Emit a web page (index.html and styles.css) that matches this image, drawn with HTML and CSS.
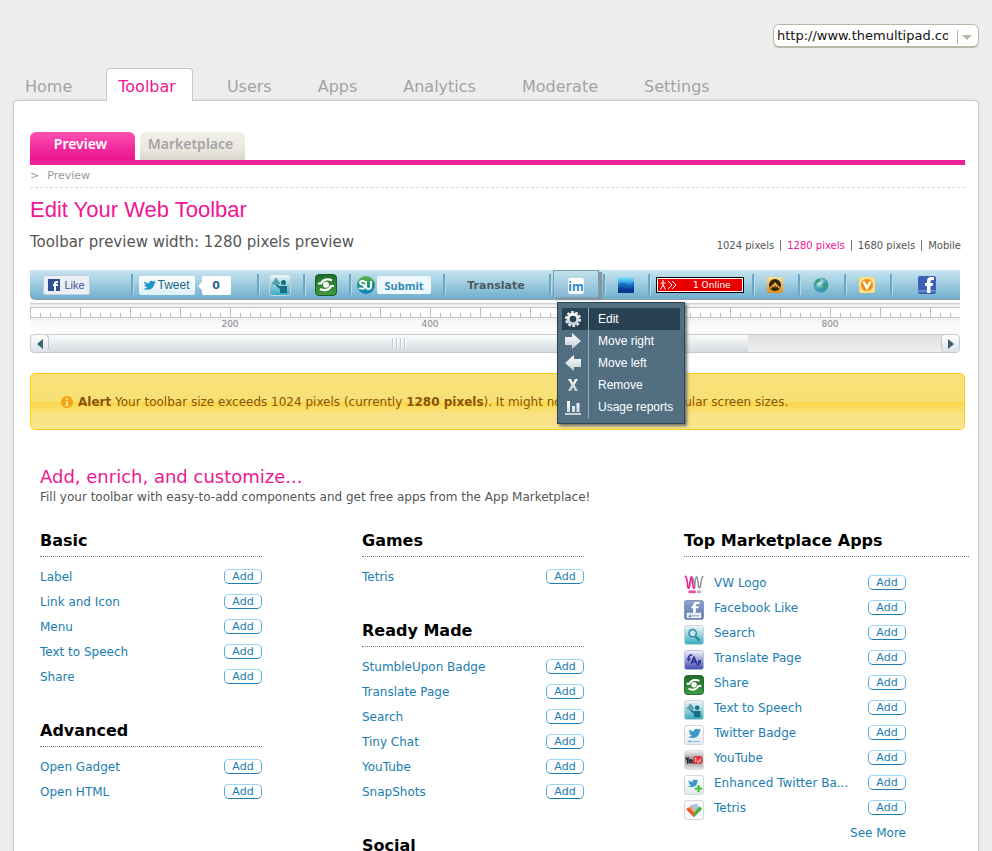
FILE: index.html
```html
<!DOCTYPE html>
<html lang="en">
<head>
<meta charset="utf-8">
<title>Edit Your Web Toolbar</title>
<link rel="stylesheet" href="styles.css">
</head>
<body>
<svg class="defs" aria-hidden="true">
  <defs>
    <linearGradient id="g-green" x2="0" y2="1"><stop offset="0" stop-color="#1f6b2b"/><stop offset="1" stop-color="#3f9b3f"/></linearGradient>
    <linearGradient id="g-teal" x2="0" y2="1"><stop offset="0" stop-color="#f4f8f9"/><stop offset="1" stop-color="#33abc2"/></linearGradient>
    <linearGradient id="g-pale" x2="0" y2="1"><stop offset="0" stop-color="#ffffff"/><stop offset="1" stop-color="#e1ebf1"/></linearGradient>
    <linearGradient id="g-indigo" x2="0" y2="1"><stop offset="0" stop-color="#f6f6fc"/><stop offset="1" stop-color="#3f48ad"/></linearGradient>
    <linearGradient id="g-fb" x2="0" y2="1"><stop offset="0" stop-color="#8fa3cb"/><stop offset="1" stop-color="#5b76ad"/></linearGradient>
    <linearGradient id="g-tube" x2="0" y2="1"><stop offset="0" stop-color="#f6f6f6"/><stop offset=".5" stop-color="#8f8f8f"/><stop offset="1" stop-color="#e9e9e9"/></linearGradient>
    <linearGradient id="g-su" x2="0" y2="1"><stop offset="0" stop-color="#62b83e"/><stop offset=".5" stop-color="#23907c"/><stop offset="1" stop-color="#0784c4"/></linearGradient>
    <linearGradient id="g-sea" x2="0" y2="1"><stop offset="0" stop-color="#8fe6fb"/><stop offset=".4" stop-color="#2792df"/><stop offset="1" stop-color="#022e94"/></linearGradient>
    <linearGradient id="g-gold" x2="0" y2="1"><stop offset="0" stop-color="#fbe094"/><stop offset="1" stop-color="#e18c15"/></linearGradient>
    <radialGradient id="g-globe" cx=".35" cy=".3"><stop offset="0" stop-color="#d9f6fb"/><stop offset="1" stop-color="#3a97b5"/></radialGradient>
    <linearGradient id="g-metal" x2="0" y2="1"><stop offset="0" stop-color="#ffffff"/><stop offset="1" stop-color="#c2ced6"/></linearGradient>
    <symbol id="bird" viewBox="0 0 24 20"><path d="M1 16c3 1 6 0 8-2-3-1-5-3-5-4h3C4 8 3 6 4 4c2 2 4 3 8 3 0-4 4-6 7-3l4-2-2 3 3 0-3 3c0 8-9 13-20 8z"/></symbol>
    <symbol id="share" viewBox="0 0 22 22"><rect x=".5" y=".5" width="21" height="21" rx="3.500" fill="url(#g-green)" stroke="#1c5d29"/><g fill="none" stroke="#fff" stroke-width="2.200"><path d="M3 9.500h3C8 5 13 4.500 17 6.500M19 12h-3C14 16.500 9 17 5 15"/></g><circle cx="11" cy="10.700" r="3" fill="#fff"/></symbol>
    <symbol id="speech" viewBox="0 0 22 22"><rect x=".5" y=".5" width="21" height="21" rx="2.500" fill="url(#g-teal)" stroke="#c9cfd2"/><path d="M2.500 10 7 3.500l4.500 6c-3 2-6 2-9 .5z" fill="#5d9fae"/><circle cx="14.500" cy="8.500" r="2.500" fill="#186f84"/><path d="M7 10l3 2h8v7h-7v-4L7 12z" fill="#186f84"/></symbol>
  </defs>
</svg>

<header class="top">
  <div class="site-picker">
    <select aria-label="Site"><option>http://www.themultipad.com</option></select>
    <svg class="picker-arrow" viewBox="0 0 20 14" aria-hidden="true"><path d="M1.500 0v14" stroke="#b9b8a8" stroke-width="1"/><path d="M6 5h10l-5 5z" fill="#b9b8a8"/></svg>
  </div>
  <nav class="main-nav">
    <a href="#home">Home</a>
    <a href="#toolbar" class="current">Toolbar</a>
    <a href="#users">Users</a>
    <a href="#apps">Apps</a>
    <a href="#analytics">Analytics</a>
    <a href="#moderate">Moderate</a>
    <a href="#settings">Settings</a>
  </nav>
</header>

<main class="panel">
  <nav class="tabs">
    <a href="#preview" class="tab tab-active">Preview</a>
    <a href="#marketplace" class="tab">Marketplace</a>
  </nav>
  <p class="crumbs"><span>&gt;</span><span>Preview</span></p>

  <h1>Edit Your Web Toolbar</h1>
  <div class="preview-head">
    <p class="preview-width">Toolbar preview width: 1280 pixels preview</p>
    <nav class="sizes">
      <a href="#1024">1024 pixels</a><a href="#1280" class="chosen">1280 pixels</a><a href="#1680">1680 pixels</a><a href="#mobile">Mobile</a>
    </nav>
  </div>

  <div class="toolbar">
    <div class="cell like-cell"><button class="like"><svg width="12" height="12" viewBox="0 0 12 12" aria-hidden="true"><path fill="#2d4f93" d="M0 0h12v12H0z"/><path fill="#fff" d="M6 12V7H5V5h1V4q0-2 3-2h1v2H9q-1 0-1 1h2v2H8v5z"/></svg>Like</button></div>
    <div class="cell tweet-cell"><button class="tweet"><svg width="14" height="12" fill="#2196c9" aria-hidden="true"><use href="#bird"/></svg>Tweet</button><span class="count">0</span></div>
    <div class="cell"><svg width="22" height="22" aria-label="Text to Speech"><use href="#speech"/></svg></div>
    <div class="cell"><svg width="22" height="22" aria-label="Share"><use href="#share"/></svg></div>
    <div class="cell submit-cell"><svg width="18" height="18" viewBox="0 0 18 18" aria-hidden="true"><circle cx="9" cy="9" r="9" fill="url(#g-su)"/><path d="M8 6.500Q8 5 5.500 5T3 6.700t2.300 2T7.500 11 5 12.700 2 12M9 5v5.500q0 2.500 2.500 2.500t2.500-2.500V5" fill="none" stroke="#fff" stroke-width="1.800"/></svg><button class="submit">Submit</button></div>
    <div class="cell translate">Translate</div>
    <div class="cell menu-cell">
      <button class="im" aria-label="Messenger" aria-haspopup="true"><span>im</span></button>
      <ul class="menu">
        <li><button class="picked"><svg viewBox="0 0 18 18" aria-hidden="true"><circle cx="9" cy="9" r="4.800" fill="none" stroke="url(#g-metal)" stroke-width="3"/><circle cx="9" cy="9" r="7" fill="none" stroke="#e6ecef" stroke-width="2.200" stroke-dasharray="2.700 1.698"/></svg>Edit</button></li>
        <li><button><svg viewBox="0 0 18 18" aria-hidden="true"><path d="M1 5h7V1l9 8-9 8v-4H1z" fill="url(#g-metal)"/></svg>Move right</button></li>
        <li><button><svg viewBox="0 0 18 18" aria-hidden="true"><path d="M17 5h-7V1L1 9l9 8v-4h7z" fill="url(#g-metal)"/></svg>Move left</button></li>
        <li><button><svg viewBox="0 0 18 18" aria-hidden="true"><path d="M4 3h3l2 4 2-4h3l-3.500 6 3.500 6h-3l-2-4-2 4H4l3.500-6z" fill="url(#g-metal)"/></svg>Remove</button></li>
        <li><button><svg viewBox="0 0 18 18" aria-hidden="true"><path d="M1 15h16v2H1zM3 3h3v11H3zM8 8h3v6H8zM12.500 5h3v9h-3z" fill="url(#g-metal)"/></svg>Usage reports</button></li>
      </ul>
    </div>
    <div class="cell"><svg width="16" height="16" viewBox="0 0 16 16" aria-hidden="true"><path fill="url(#g-sea)" d="M0 0h16v16H0z"/><path d="M0 8q4-4 8-1t8-2v11H0z" fill="#0b4fb0" opacity=".5"/><path d="M0 11q4-2 8 0t8-2v7H0z" fill="#03256f" opacity=".4"/></svg></div>
    <div class="cell"><span class="online"><svg width="18" height="10" viewBox="0 0 18 10" fill="none" stroke="#fff" aria-hidden="true"><path d="M1.500 3h5M4 0v6M4 5 1.500 9.500M4 5l2.500 4.500M9 1l4 4-4 4M13 1l4 4-4 4"/></svg>1 Online</span></div>
    <div class="cell"><svg width="16" height="16" viewBox="0 0 16 16" aria-hidden="true"><rect width="16" height="16" rx="2" fill="url(#g-gold)"/><circle cx="8" cy="8" r="6" fill="#332307"/><path d="M3 10q2-1 5-5 3 4 5 5l-1 2-2-3-1 2-1-3-1 3-1-2-2 3z" fill="#efae39"/></svg></div>
    <div class="cell"><svg width="16" height="16" viewBox="0 0 16 16" aria-hidden="true"><circle cx="8" cy="8" r="7.500" fill="url(#g-globe)"/><path d="M3 3q3-2 5-1l-1 3-3 1-1 4-2-3zM9 7l4-2 2 3-3 5-3-1 1-3z" fill="#3d9c73"/></svg></div>
    <div class="cell"><svg width="16" height="16" viewBox="0 0 16 16" aria-hidden="true"><rect width="16" height="16" rx="2" fill="#fbdd83"/><circle cx="8" cy="8" r="6" fill="#f18b14"/><path d="M4.500 4.500 8 11l3.500-6.500" fill="none" stroke="#fff" stroke-width="2.500"/></svg></div>
    <div class="cell fb-cell"><svg width="18" height="18" viewBox="0 0 18 18" aria-hidden="true"><rect width="18" height="18" rx="2" fill="#3d5fb4"/><path fill="#6c8ad0" d="M0 14h18v2H0z"/><path fill="#fff" d="M9 17v-7H7V7h2V5q0-4 4-4h3v3h-2q-1.500 0-1.500 1.500V7H15l-.5 3h-2v7z"/></svg></div>
  </div>

  <div class="ruler" aria-hidden="true"></div>
  <div class="ruler-labels"><span>200</span><span>400</span><span></span><span>800</span></div>
  <div class="scroller">
    <button aria-label="Scroll left"><svg width="6" height="10" viewBox="0 0 6 10"><path d="M6 0v10L0 5z"/></svg></button>
    <div class="track"><div class="thumb"><i></i><i></i><i></i><i></i></div></div>
    <button aria-label="Scroll right"><svg width="6" height="10" viewBox="0 0 6 10"><path d="M0 0v10l6-5z"/></svg></button>
  </div>

  <div class="alert" role="alert">
    <svg width="12" height="12" viewBox="0 0 12 12" aria-hidden="true"><circle cx="6" cy="6" r="6" fill="#f6a30c"/><path d="M5 2h2v2H5zM4.500 5H7v4h1v1H4V9h1V6h-.5z" fill="#fde79a"/></svg>
    <p><b>Alert</b> Your toolbar size exceeds 1024 pixels (currently <b>1280 pixels</b>). It might not display well for regular screen sizes.</p>
  </div>

  <section class="market">
    <h2>Add, enrich, and customize...</h2>
    <p class="intro">Fill your toolbar with easy-to-add components and get free apps from the App Marketplace!</p>
    <div class="columns">
      <div class="column">
        <section class="group">
          <h3>Basic</h3>
          <ul>
            <li><a href="#label">Label</a><button class="add">Add</button></li>
            <li><a href="#link">Link and Icon</a><button class="add">Add</button></li>
            <li><a href="#menu">Menu</a><button class="add">Add</button></li>
            <li><a href="#text-speech">Text to Speech</a><button class="add">Add</button></li>
            <li><a href="#share-basic">Share</a><button class="add">Add</button></li>
          </ul>
        </section>
        <section class="group">
          <h3>Advanced</h3>
          <ul>
            <li><a href="#gadget">Open Gadget</a><button class="add">Add</button></li>
            <li><a href="#html">Open HTML</a><button class="add">Add</button></li>
          </ul>
        </section>
      </div>
      <div class="column">
        <section class="group">
          <h3>Games</h3>
          <ul>
            <li><a href="#tetris">Tetris</a><button class="add">Add</button></li>
          </ul>
        </section>
        <section class="group">
          <h3>Ready Made</h3>
          <ul>
            <li><a href="#stumble">StumbleUpon Badge</a><button class="add">Add</button></li>
            <li><a href="#translate">Translate Page</a><button class="add">Add</button></li>
            <li><a href="#search">Search</a><button class="add">Add</button></li>
            <li><a href="#chat">Tiny Chat</a><button class="add">Add</button></li>
            <li><a href="#youtube">YouTube</a><button class="add">Add</button></li>
            <li><a href="#snapshots">SnapShots</a><button class="add">Add</button></li>
          </ul>
        </section>
        <section class="group">
          <h3>Social</h3>
        </section>
      </div>
      <div class="column">
        <section class="group apps">
          <h3>Top Marketplace Apps</h3>
          <ul>
            <li><svg viewBox="0 0 22 22" aria-hidden="true"><path d="M1 1q3 2 3 12 1 3 2 0 1-10 2-11 1 1 2 11 1 3 2 0" fill="none" stroke="#ec1c94" stroke-width="1.800"/><path d="M12 13q0-10 2-11 1 1 2 11 1 3 2 0 1-9 3-12M9 2q2 3 3 11" fill="none" stroke="#8d8d93" stroke-width="1.500"/><path fill="#ec4fa5" d="M5 17h8v3H5z"/><path fill="#b5b5b9" d="M14 17h5v3h-5z"/></svg><a href="#vw">VW Logo</a><button class="add">Add</button></li>
            <li><svg viewBox="0 0 22 22" aria-hidden="true"><rect x=".5" y=".5" width="21" height="21" rx="2.500" fill="url(#g-fb)" stroke="#7d90ba"/><path fill="#fff" d="M10 14V9H8V7h2V6q0-4 4-4h3v2.500h-2Q13 4.500 13 6v1h3v2h-3v5z"/><path fill="#eef1f8" d="M3 14h16v6H3z"/><path fill="#7387b6" d="M5 17h2v-2h1v4H5zM9 17h8v1H9z"/></svg><a href="#facebook">Facebook Like</a><button class="add">Add</button></li>
            <li><svg viewBox="0 0 22 22" aria-hidden="true"><rect x=".5" y=".5" width="21" height="21" rx="2.500" fill="url(#g-teal)" stroke="#c9cfd2"/><circle cx="9.500" cy="9" r="4" fill="#c7e8ee" stroke="#2b8da2" stroke-width="1.700"/><path d="M12.500 12.500 17 17" stroke="#2b8da2" stroke-width="2.500"/></svg><a href="#find">Search</a><button class="add">Add</button></li>
            <li><svg viewBox="0 0 22 22" aria-hidden="true"><rect x=".5" y=".5" width="21" height="21" rx="2.500" fill="url(#g-indigo)" stroke="#b9bddd"/><path d="M8 15l3-7 3 7M9 13h4" fill="none" stroke="#222b91" stroke-width="1.700"/><path d="M5 11q-1-5 4-6M17 11q0 5-3 6" fill="none" stroke="#343c9c" stroke-width="2"/><path d="M3 9h5l-3 4zM15 12l4-1-1 5z" fill="#343c9c"/></svg><a href="#page">Translate Page</a><button class="add">Add</button></li>
            <li><svg aria-hidden="true"><use href="#share"/></svg><a href="#share-app">Share</a><button class="add">Add</button></li>
            <li><svg aria-hidden="true"><use href="#speech"/></svg><a href="#speech-app">Text to Speech</a><button class="add">Add</button></li>
            <li><svg viewBox="0 0 22 22" aria-hidden="true"><rect x=".5" y=".5" width="21" height="21" rx="2.500" fill="url(#g-pale)" stroke="#ccd3d8"/><use href="#bird" x="3" y="2" width="16" height="14" fill="#3d95c8"/><path fill="#58a9d4" d="M5 17h3v2H5zM9 17.500h8v1H9z"/></svg><a href="#twitter">Twitter Badge</a><button class="add">Add</button></li>
            <li><svg viewBox="0 0 22 22" aria-hidden="true"><rect x=".5" y=".5" width="21" height="21" rx="2.500" fill="url(#g-tube)" stroke="#dcdcdc"/><path fill="none" stroke="#222" stroke-width="1.400" d="M2 8l2 3 1-3M4 11v4M6 11v3h2v-3zM10 11v4"/><rect x="10" y="7" width="10" height="8" rx="2" fill="#e3262b"/><path fill="none" stroke="#fff" stroke-width=".7" d="M11 9h3M12.500 9v4.500M14.500 10.500v3h2v-3M18 9v4.500"/></svg><a href="#tube">YouTube</a><button class="add">Add</button></li>
            <li><svg viewBox="0 0 22 22" aria-hidden="true"><rect x=".5" y=".5" width="21" height="21" rx="2.500" fill="url(#g-pale)" stroke="#ccd3d8"/><use href="#bird" x="3" y="3" width="13" height="12" fill="#3d95c8"/><path d="M16 11v8M12 15h8" stroke="#4fbf45" stroke-width="2.500"/></svg><a href="#enhanced">Enhanced Twitter Ba...</a><button class="add">Add</button></li>
            <li><svg viewBox="0 0 22 22" aria-hidden="true"><rect x=".5" y=".5" width="21" height="21" rx="2.500" fill="#fafafa" stroke="#d3d3d3"/><path fill="#a9c3ea" d="m6 7 4-2 5-1 1 5-4 4z"/><path fill="#e9562b" d="m3 9 3-1 6 7-1 4-8-8z"/><path fill="#f5a052" d="m6 8 2-1 4 5v3z"/><path fill="#49b23c" d="m11 14 6-7 3 3-9 9z"/></svg><a href="#tetris-app">Tetris</a><button class="add">Add</button></li>
          </ul>
          <a href="#more" class="more">See More</a>
        </section>
      </div>
    </div>
  </section>
</main>
</body>
</html>
```
FILE: styles.css
```css
* { box-sizing: border-box; }

html { background: #ededed; }

body {
  margin: 0;
  font-family: "DejaVu Sans", sans-serif;
  font-size: 12px;
  color: #555;
}

h1, h2, h3, p, ul { margin: 0; padding: 0; font-weight: normal; }
ul { list-style: none; }
a { color: inherit; text-decoration: none; }
button { font: inherit; color: inherit; margin: 0; padding: 0; border: 0; background: none; cursor: pointer; }
svg { display: block; flex: none; }
.defs { position: absolute; width: 0; height: 0; }

/* Header */
.top { padding: 24px 13px 0; }

.site-picker { position: relative; width: 206px; height: 24px; margin-left: auto; }
.site-picker select {
  appearance: none;
  width: 100%;
  height: 100%;
  padding: 0 30px 0 3px;
  border: 1px solid #b9b8a8;
  border-bottom-width: 2px;
  border-radius: 6px;
  background: #fff;
  color: #111;
  font: 13px "DejaVu Sans", sans-serif;
}
.picker-arrow { position: absolute; right: 3px; top: 6px; width: 20px; height: 14px; }

.main-nav { display: flex; gap: 22px; margin-top: 20px; }
.main-nav a {
  height: 32px;
  padding: 0 11px;
  border: 1px solid transparent;
  border-bottom: 0;
  line-height: 35px;
  font-size: 16px;
  color: #a3a3a3;
}
.main-nav a.current {
  position: relative;
  height: 33px;
  margin-bottom: -1px;
  padding-right: 16px;
  border-color: #c8c8c8;
  border-radius: 4px 4px 0 0;
  background: #fff;
  color: #ee1693;
}

.panel {
  min-height: calc(100vh - 100px);
  margin: 0 13px;
  padding: 31px 13px 0 16px;
  border: 1px solid #ccc;
  border-bottom: 0;
  border-radius: 5px 5px 0 0;
  background: #fff;
  box-shadow: 0 0 3px #d8d8d8;
}

/* Section tabs */
.tabs { display: flex; gap: 5px; border-bottom: 5px solid #f01f9b; }
.tab {
  width: 105px;
  height: 28px;
  padding-right: 4px;
  border-radius: 6px 6px 0 0;
  background: linear-gradient(#f1efe8, #ebe8df 60%, #d9d5cc);
  color: #a5a5a5;
  font: 600 14px/24px "Noto Sans", sans-serif;
  text-align: center;
}
.tab-active { background: linear-gradient(#ff4fb4, #ea128d); color: #fff; }

.crumbs {
  display: flex;
  gap: 8px;
  height: 23px;
  border-bottom: 1px dashed #d6d6d6;
  line-height: 21px;
  font-size: 11px;
  color: #999;
}

h1 { margin-top: 8px; font: 22px/28px "Liberation Sans", sans-serif; color: #ee1693; }

.preview-head { display: flex; justify-content: space-between; align-items: center; height: 36px; }
.preview-width { font-size: 15px; }
.sizes { display: flex; margin: 6px 4px 0 0; font-size: 10px; line-height: 11px; }
.sizes a + a { margin-left: 6px; padding-left: 6px; border-left: 1px solid #777; }
.sizes .chosen { color: #ee1693; }

/* Toolbar preview */
.toolbar {
  display: grid;
  grid-template-columns: 101px 126px 46px 46px 94px 106px 54px 45px 104px 46px 46px 46px 1fr;
  height: 30px;
  margin: 10px 5px 0 0;
  border-bottom: 1px solid #8fa3ad;
  border-radius: 0 0 0 5px;
  background: linear-gradient(#c8e4ef, #9ccbdf 50%, #70aecd);
}
.cell { position: relative; display: flex; align-items: center; justify-content: center; }
.cell + .cell::before {
  content: "";
  position: absolute;
  left: 0;
  top: 4px;
  width: 2px;
  height: 21px;
  background: #6ba6c4;
  border-right: 1px solid #b9dbe9;
}
.like, .tweet, .submit, .count { display: flex; align-items: center; border-radius: 2px; }
.like-cell { padding-right: 28px; }
.like {
  gap: 4px;
  height: 20px;
  padding: 0 4px;
  border: 1px solid #c6cbe0;
  background: #eceef5;
  color: #3b5098;
  font: 11px "Liberation Sans", sans-serif;
}
.tweet-cell { padding-right: 18px; }
.tweet {
  gap: 1px;
  height: 19px;
  padding: 0 5px 0 3px;
  background: linear-gradient(#fff, #def0f7);
  color: #206789;
  font: 12px "Liberation Sans", sans-serif;
}
.count {
  position: relative;
  justify-content: center;
  width: 29px;
  height: 19px;
  margin-left: 7px;
  background: #fff;
  color: #206789;
  font-weight: bold;
  font-size: 11px;
}
.count::before {
  content: "";
  position: absolute;
  left: -4px;
  top: 6px;
  border: 4px solid transparent;
  border-left: 0;
  border-right-color: #fff;
}
.submit-cell { gap: 2px; padding-right: 4px; }
.submit {
  justify-content: center;
  width: 54px;
  height: 18px;
  background: #edf7fc;
  color: #2f89b6;
  font: 700 11px "Noto Sans", sans-serif;
}
.translate { font: 700 11px "DejaVu Sans", sans-serif; color: #4d5860; }
.fb-cell { padding-left: 4px; }
.online {
  display: flex;
  align-items: center;
  gap: 16px;
  width: 88px;
  height: 16px;
  padding-left: 2px;
  border: 1px solid #000;
  background: #e80000;
  box-shadow: inset 0 0 0 1px #fff;
  color: #fff;
  font: 9px "DejaVu Sans", sans-serif;
  white-space: nowrap;
}

.im {
  width: 46px;
  height: 28px;
  margin-bottom: 2px;
  border: 1px solid #7f9db1;
  background: linear-gradient(#c3e0ec, #84b9d3);
  box-shadow: 3px 2px 1px #8297a2;
}
.im span {
  display: block;
  width: 16px;
  height: 16px;
  margin: 3px auto 0;
  border-radius: 3px;
  background: #fff;
  color: #2a87cf;
  font: 700 12px/17px "Noto Sans", sans-serif;
}

.menu {
  position: absolute;
  left: 8px;
  top: 32px;
  z-index: 2;
  width: 128px;
  padding: 5px 4px;
  border: 1px solid #2b4657;
  background: #526f82;
  box-shadow: 2px 2px 3px #6b6b6b;
  color: #fff;
  font: 12px "Liberation Sans", sans-serif;
}
.menu button {
  display: flex;
  align-items: center;
  gap: 10px;
  width: 100%;
  height: 22px;
  background: linear-gradient(#98a9b4, #98a9b4) 26px 0 / 1px 100% no-repeat;
  white-space: nowrap;
}
.menu svg { width: 26px; height: 18px; padding: 0 6px 0 2px; }
.menu .picked { background-color: #294253; }

/* Ruler and scroller */
.ruler {
  height: 17px;
  margin: 3px 5px 0 0;
  border-top: 1px solid #d0d0d0;
  background:
    linear-gradient(#c2c2c2, #c2c2c2) 0 3px / 100% 1px no-repeat,
    linear-gradient(#c2c2c2, #c2c2c2) 0 13px / 100% 1px no-repeat,
    repeating-linear-gradient(90deg, #bdbdbd 0 1px, transparent 1px 50px) 0 3px / 100% 10px no-repeat,
    repeating-linear-gradient(90deg, #bdbdbd 0 1px, transparent 1px 10px) 0 9px / 100% 4px no-repeat,
    linear-gradient(#e2e2e2, #fff 4px, #fff 13px, #ececec);
}
.ruler-labels {
  display: flex;
  height: 14px;
  margin-right: 5px;
  padding-left: 100px;
  background: linear-gradient(#f6f6f6, #fff);
  font-size: 9px;
  line-height: 9px;
  color: #85858f;
}
.ruler-labels span { flex: 0 0 200px; text-align: center; }

.scroller {
  display: flex;
  height: 19px;
  margin-right: 5px;
  border: 1px solid #c3c9cc;
  border-radius: 4px;
  background: linear-gradient(#e0e0e0, #efefef);
  overflow: hidden;
}
.scroller button {
  display: flex;
  align-items: center;
  justify-content: center;
  flex: 0 0 18px;
  border-right: 1px solid #c3c9cc;
  border-radius: 4px;
  background: linear-gradient(#fff, #dde2e6);
  fill: #3d6074;
}
.scroller button:last-child { border-right: 0; border-left: 1px solid #c3c9cc; }
.track { flex: 1; }
.thumb {
  display: flex;
  align-items: center;
  justify-content: center;
  gap: 2px;
  width: 78.4%;
  height: 100%;
  background: linear-gradient(#fbfcfc, #d5dbdf);
}
.thumb i { width: 2px; height: 11px; background: #c5ccd1; border-right: 1px solid #fff; }

.alert {
  display: flex;
  align-items: center;
  gap: 5px;
  height: 57px;
  margin-top: 20px;
  padding-left: 30px;
  border: 1px solid #fccf12;
  border-radius: 5px;
  background: linear-gradient(#f8e17a, #f7e074 28px, #fad745 28px, #fae283 40px, #f9e58f);
  color: #8c5206;
  white-space: nowrap;
}

/* Component lists */
.market { padding: 35px 0 0 10px; margin-right: -4px; }
h2 { font-size: 18px; line-height: 24px; color: #ee1693; }
.intro { font-size: 12px; line-height: 17px; }
.columns {
  display: grid;
  grid-template-columns: 222px 222px 1fr;
  column-gap: 100px;
  margin-top: 25px;
}
h3 {
  padding-bottom: 5px;
  border-bottom: 1px dotted #777;
  font-weight: bold;
  font-size: 16px;
  line-height: 20px;
  color: #000;
}
.group { margin-bottom: 32px; color: #1b7db0; }
.group ul { margin-top: 7px; }
.group li { display: flex; align-items: center; justify-content: space-between; height: 25px; }
.add {
  width: 38px;
  height: 15px;
  border: 1px solid #5aaede;
  border-top-color: #9bd8f6;
  border-bottom-color: #1c7db5;
  border-radius: 5px;
  background: #fff;
  font-size: 11px;
  line-height: 14px;
}
.apps ul { width: 222px; margin-top: 13px; }
.apps li a { flex: 1; padding-left: 10px; }
.apps li svg { width: 20px; height: 20px; margin-top: 5px; }
.more { display: block; width: 222px; line-height: 27px; text-align: right; }
```
